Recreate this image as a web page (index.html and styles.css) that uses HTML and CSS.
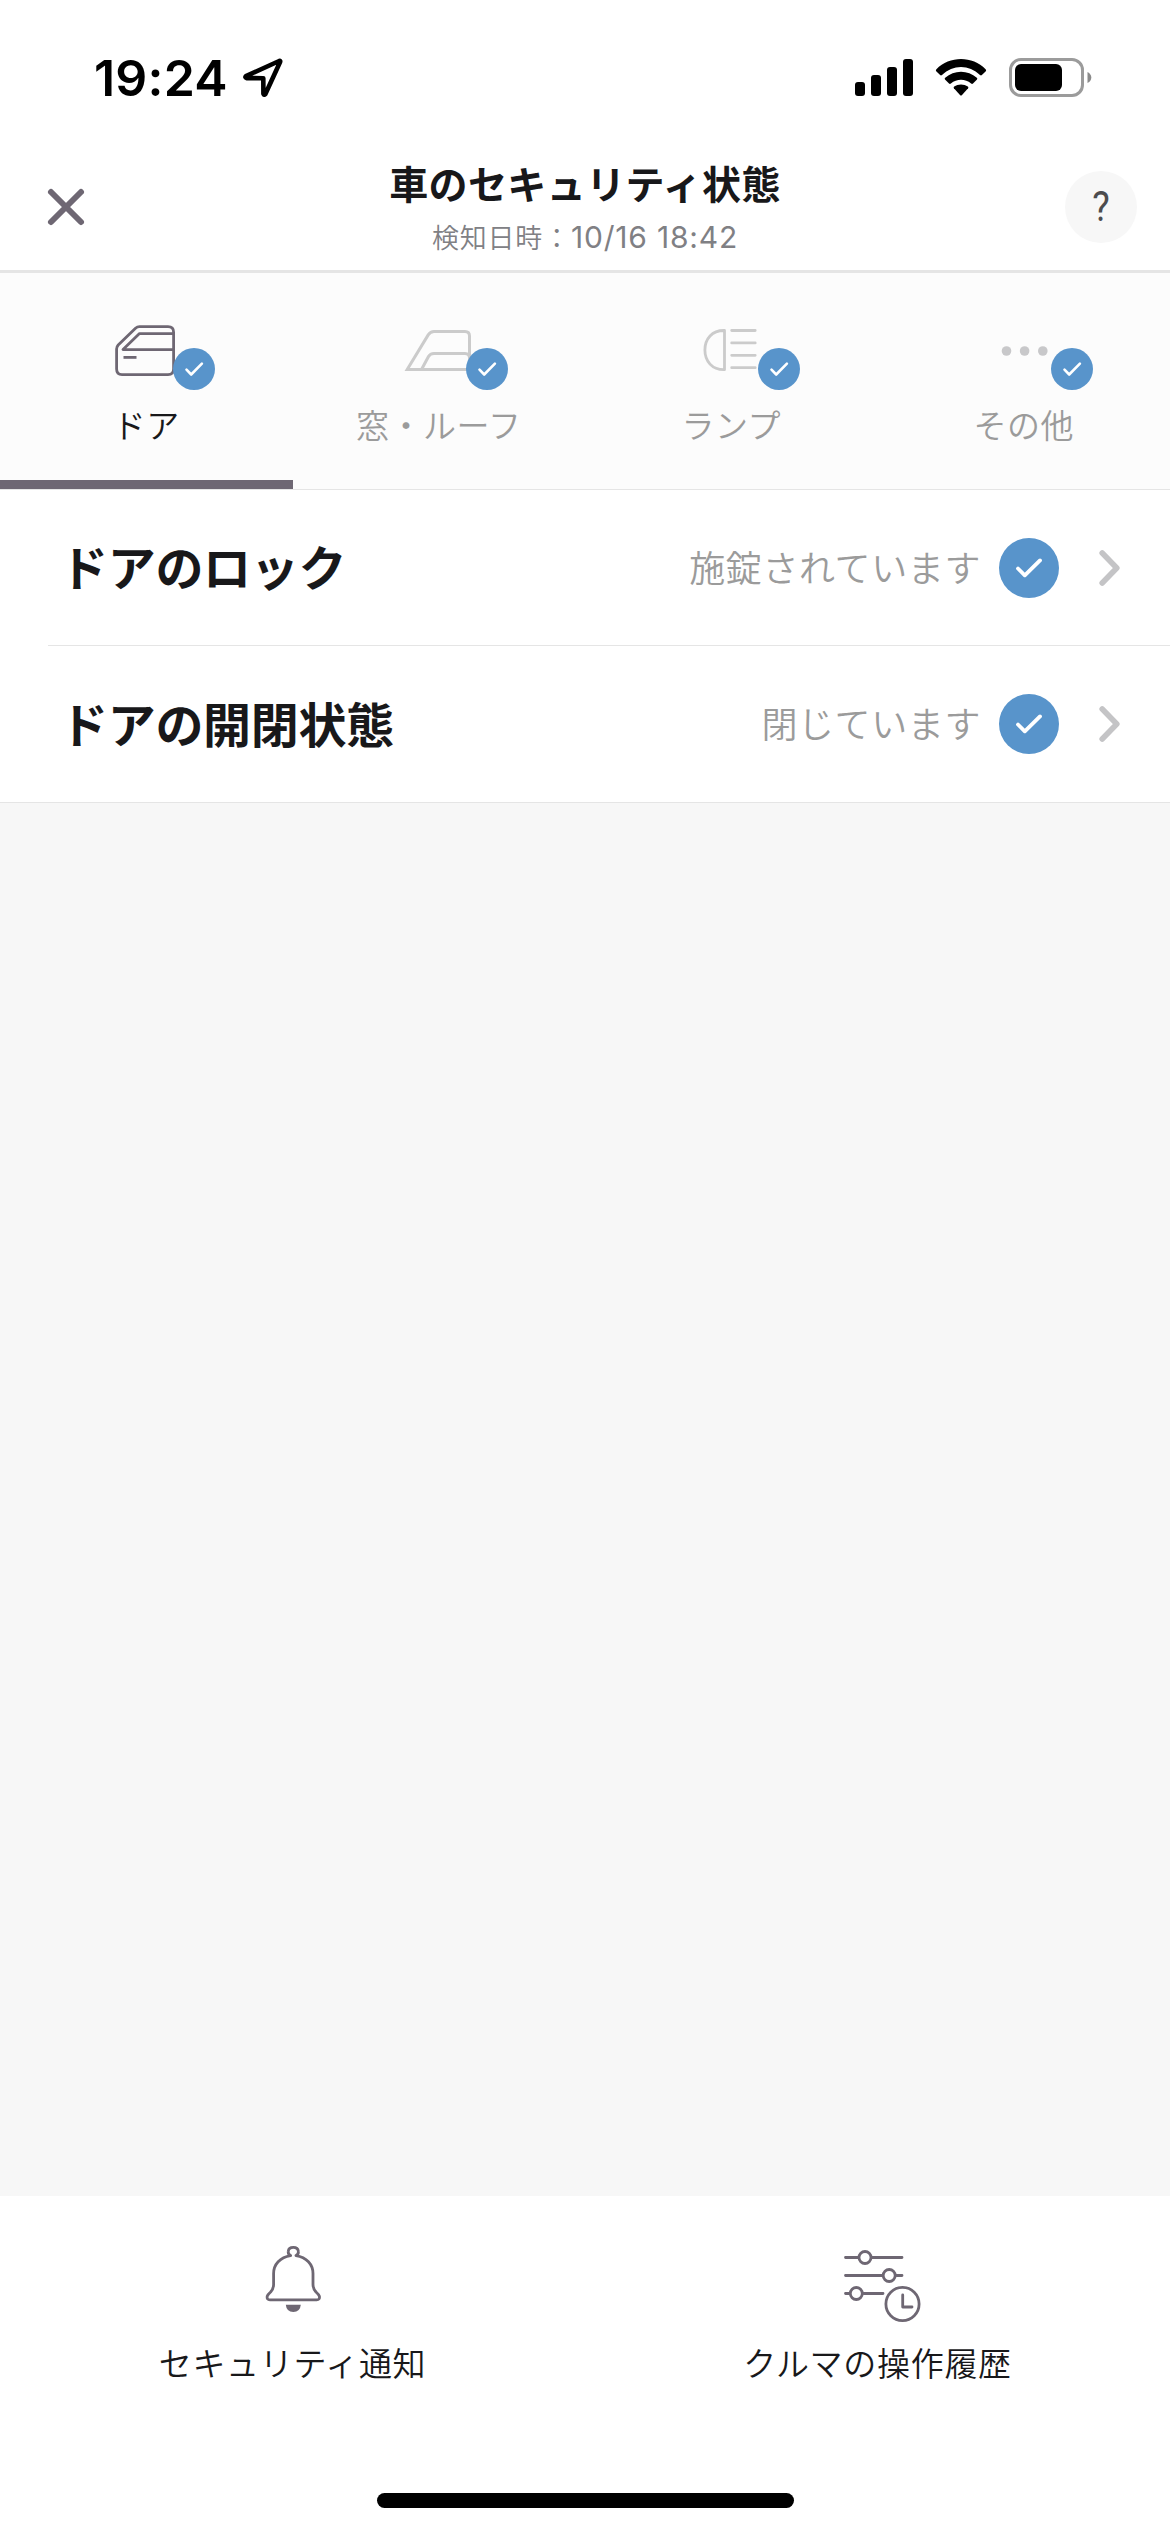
FILE: index.html
```html
<!DOCTYPE html>
<html lang="ja">
<head>
<meta charset="utf-8">
<title>車のセキュリティ状態</title>
<link rel="stylesheet" href="styles.css">
</head>
<body>
<svg width="0" height="0" class="defs" aria-hidden="true">
  <symbol id="badge" viewBox="0 0 42 42">
    <circle cx="21" cy="21" r="21" fill="#5894cb"/>
    <path d="M13.5 21.7 L18.2 26.5 L28.9 15.7" fill="none" stroke="#fff" stroke-width="2.6" stroke-linecap="round" stroke-linejoin="round"/>
  </symbol>
  <symbol id="check" viewBox="0 0 60 60">
    <circle cx="30" cy="30" r="30" fill="#5894cb"/>
    <path d="M19 30.5 L25.8 37.3 L41 22.4" fill="none" stroke="#fff" stroke-width="3.8" stroke-linecap="round" stroke-linejoin="round"/>
  </symbol>
  <symbol id="chevron" viewBox="0 0 22 36">
    <path d="M3.2 3 L17.8 18 L3.2 33" fill="none" stroke="#c4c4c6" stroke-width="5.6" stroke-linecap="round" stroke-linejoin="round"/>
  </symbol>
</svg>

<div class="statusbar">
  <div class="clock">
    <span class="time">19:24</span>
    <svg class="location" width="40" height="40" viewBox="0 0 40 40"><path d="M2.9 18.2 L36.2 3 Q37.6 2.6 37.1 4 L22.3 36.2 Q21 37.6 20.4 35.8 L20.3 20.2 L3.6 20.1 Q1.6 19.4 2.9 18.2 Z" fill="none" stroke="#000" stroke-width="4.6" stroke-linejoin="round"/></svg>
  </div>
  <div class="indicators">
    <svg width="58" height="38" viewBox="0 0 58 38"><rect x="0" y="23" width="10" height="14" rx="3"/><rect x="16" y="16" width="10" height="21" rx="3"/><rect x="32" y="8" width="10" height="29" rx="3"/><rect x="48" y="0" width="10" height="37" rx="3"/></svg>
    <svg width="52" height="38" viewBox="0 0 52 38">
      <path d="M1.2 12.2 Q0.4 11.2 1.4 10.2 C14.5 -3.4 37.5 -3.4 50.6 10.2 Q51.6 11.2 50.8 12.2 L46.9 16 Q46 16.8 45 16 C34 5.2 18 5.2 7 16 Q6 16.8 5.1 16 Z"/>
      <path d="M10 20.6 Q9.2 19.6 10.2 18.8 C19 10.6 33 10.6 41.8 18.8 Q42.8 19.6 42 20.6 L38 24.6 Q37.1 25.4 36.1 24.6 C30.3 19.6 21.7 19.6 15.9 24.6 Q14.9 25.4 14 24.6 Z"/>
      <path d="M18.9 29.2 Q18.2 28.4 19.2 27.6 C23 24.8 29 24.8 32.8 27.6 Q33.8 28.4 33.1 29.2 L26.8 36.2 Q26 37 25.2 36.2 Z"/>
    </svg>
    <svg width="83" height="40" viewBox="0 0 83 40"><rect x="1.5" y="1.5" width="72" height="36" rx="10.5" fill="none" stroke="#9b9b9b" stroke-width="3"/><rect x="6" y="6" width="47" height="27" rx="6"/><path d="M78.5 14 Q82.3 16 82.3 19.5 Q82.3 23 78.5 25 Z" fill="#8a8a8a"/></svg>
  </div>
</div>

<header class="header">
  <button class="icon-button" aria-label="閉じる"><svg width="36" height="36" viewBox="0 0 36 36"><path d="M3 3 L33 33 M33 3 L3 33" stroke="#6e6773" stroke-width="6" stroke-linecap="round"/></svg></button>
  <div class="heading">
    <h1 class="title">車のセキュリティ状態</h1>
    <p class="detected">検知日時：<span class="stamp">10/16 18:42</span></p>
  </div>
  <button class="help" aria-label="ヘルプ"><span class="help-mark">?</span></button>
</header>

<nav class="tabs">
  <a class="tab active">
    <span class="tab-icon">
      <svg width="66" height="56" viewBox="0 0 66 56" fill="none" stroke="#6e6773" stroke-width="2.8" stroke-linejoin="round"><path d="M26.5 3.6 H55 Q60.6 3.6 60.6 9.2 V46 Q60.6 51.6 55 51.6 H9 Q3.6 51.6 3.6 46 V26 Q3.6 23.8 5.2 22 L22.5 5.2 Q24.3 3.6 26.5 3.6 Z"/><path d="M60.6 10.6 H26.5 L10 26.6 H60.6"/><path d="M10.5 34.4 H23.5"/></svg>
      <svg class="badge"><use href="#badge"/></svg>
    </span>
    <span class="tab-label">ドア</span>
  </a>
  <a class="tab">
    <span class="tab-icon">
      <svg width="72" height="56" viewBox="0 0 72 56" fill="none" stroke="#cbcbcb" stroke-width="3"><path d="M4.2 46.5 L25.2 11.9 Q27.5 8.5 31 8.5 H62 Q66.5 8.5 66.5 13 V46.5 Z"/><path d="M18.5 46.5 L25.5 33.5 Q27.2 30.5 31 30.5 H62 Q66.5 30.5 66.5 35"/></svg>
      <svg class="badge"><use href="#badge"/></svg>
    </span>
    <span class="tab-label">窓・ルーフ</span>
  </a>
  <a class="tab">
    <span class="tab-icon">
      <svg width="66" height="56" viewBox="0 0 66 56" fill="none" stroke="#cbcbcb" stroke-width="2.8" stroke-linecap="round" stroke-linejoin="round"><path d="M26.5 7.5 V46.7 C14 47 6.9 38 6.9 27.1 C6.9 16 14 7.2 26.5 7.5 Z"/><path d="M33.7 7.5 H57.2 M33.7 19.9 H57.2 M33.7 32.3 H57.2 M33.7 44.7 H57.2"/></svg>
      <svg class="badge"><use href="#badge"/></svg>
    </span>
    <span class="tab-label">ランプ</span>
  </a>
  <a class="tab">
    <span class="tab-icon">
      <svg width="66" height="56" viewBox="0 0 66 56" fill="#c8c8ca"><circle cx="15.5" cy="28" r="4.8"/><circle cx="33.6" cy="28" r="4.8"/><circle cx="51.8" cy="28" r="4.8"/></svg>
      <svg class="badge"><use href="#badge"/></svg>
    </span>
    <span class="tab-label">その他</span>
  </a>
</nav>

<main class="content">
  <ul class="list">
    <li class="row">
      <span class="row-label">ドアのロック</span>
      <span class="row-status">施錠されています</span>
      <svg class="row-check"><use href="#check"/></svg>
      <svg class="row-chevron"><use href="#chevron"/></svg>
    </li>
    <li class="row">
      <span class="row-label">ドアの開閉状態</span>
      <span class="row-status">閉じています</span>
      <svg class="row-check"><use href="#check"/></svg>
      <svg class="row-chevron"><use href="#chevron"/></svg>
    </li>
  </ul>
</main>

<footer class="footer">
  <div class="actions">
    <a class="action">
      <svg class="action-icon" viewBox="0 0 84 80" fill="none" stroke="#6e6773" stroke-width="2.8" stroke-linejoin="round" stroke-linecap="round"><path d="M39.6 16.6 Q36.8 15.2 37.3 12.2 C37.8 7.1 46.8 7.1 47.3 12.2 Q47.8 15.2 45 16.6 C55.5 18.2 62 25.4 62 34.5 V45.5 Q62 49.6 65 53 Q67.8 55.6 68.4 57.2 Q69 60.9 65.6 60.9 H19 Q15.6 60.9 16.2 57.2 Q16.8 55.6 19.6 53 Q22.6 49.6 22.6 45.5 V34.5 C22.6 25.4 29.1 18.2 39.6 16.6"/><path d="M34.8 65.8 H49.8 Q49.1 73 42.3 73 Q35.5 73 34.8 65.8 Z" fill="#6e6773" stroke="none"/></svg>
      <span class="action-label">セキュリティ通知</span>
    </a>
    <a class="action">
      <svg class="action-icon" viewBox="0 0 84 80" fill="none" stroke="#6e6773" stroke-width="2.8" stroke-linecap="round"><path d="M9.5 18.5 H21.8 M36.2 18.5 H66 M9.5 36.5 H46.2 M60.5 36.5 H66 M9.5 54.5 H13.2 M27.6 54.5 H47"/><circle cx="29" cy="18.5" r="6"/><circle cx="53.2" cy="36.5" r="6"/><circle cx="20.3" cy="54.5" r="6"/><circle cx="66.5" cy="65" r="16.6"/><path d="M66.7 56 V68 H76" stroke-linejoin="round"/></svg>
      <span class="action-label">クルマの操作履歴</span>
    </a>
  </div>
  <div class="home-indicator"></div>
</footer>
</body>
</html>
```
FILE: styles.css
```css
* { box-sizing: border-box; margin: 0; padding: 0; }

body {
  width: 1170px;
  height: 2532px;
  display: flex;
  flex-direction: column;
  background: #fff;
  color: #18181a;
  font-family: "Noto Sans CJK JP", sans-serif;
  overflow: hidden;
}

svg { display: block; overflow: visible; flex: none; }
.defs { position: absolute; }
button { border: 0; background: none; font: inherit; }

.statusbar {
  height: 144px;
  padding: 58px 78px 0 94px;
  display: flex;
  justify-content: space-between;
  align-items: flex-start;
  color: #000;
}
.clock { display: flex; gap: 15px; }
.time {
  font: 600 50px/40px "Inter", sans-serif;
  letter-spacing: 0.2px;
  width: 134px;
  white-space: nowrap;
}
.indicators { display: flex; gap: 22px; padding-top: 1px; }
.indicators svg:last-child { margin-top: -1px; }

.header {
  height: 129px;
  padding: 0 33px 0 48px;
  border-bottom: 3px solid #e5e5e5;
  display: grid;
  grid-template-columns: 72px 1fr 72px;
}
.icon-button { height: 126px; display: flex; align-items: center; }
.heading { text-align: center; padding: 12px 0 0 0; margin-right: 15px; }
.title { font-size: 39px; line-height: 52px; font-weight: 700; letter-spacing: 0.4px; }
.detected { font-size: 27px; line-height: 57px; font-weight: 350; letter-spacing: 0.8px; color: #808084; }
.stamp { font-family: "Inter", sans-serif; font-size: 30px; font-weight: 400; }
.help {
  width: 72px;
  height: 72px;
  margin-top: 27px;
  border-radius: 50%;
  background: #f7f7f7;
  display: flex;
  align-items: center;
  justify-content: center;
}
.help-mark {
  font: 400 42px/42px Roboto, sans-serif;
  color: #4c4c4e;
  transform: scaleX(0.88);
}

.tabs {
  height: 217px;
  display: grid;
  grid-template-columns: repeat(4, 1fr);
  background: #fcfcfc;
  border-bottom: 1px solid #e5e5e5;
}
.tab {
  display: flex;
  flex-direction: column;
  align-items: center;
  padding-top: 50px;
  border-bottom: 9px solid transparent;
  color: #9b9b9b;
}
.tab.active { color: #18181a; border-bottom-color: #6e6773; }
.tab-icon { position: relative; width: 66px; height: 56px; display: flex; justify-content: center; }
.badge { position: absolute; left: 60px; top: 25px; width: 42px; height: 42px; }
.tab-label { margin-top: 21px; font-size: 33px; line-height: 48px; font-weight: 350; letter-spacing: 0.5px; }

.content { flex: 1; background: #f7f7f7; }
.list { list-style: none; background: #fff; border-bottom: 1px solid #e5e5e5; padding-left: 48px; }
.row {
  height: 156px;
  padding: 0 49px 0 12px;
  display: flex;
  align-items: center;
}
.row:first-child { border-bottom: 1px solid #e5e5e5; }
.row-label { flex: 1; padding-bottom: 5px; font-size: 48px; line-height: 72px; font-weight: 700; letter-spacing: -0.3px; }
.row-status { padding-bottom: 4px; font-size: 36px; line-height: 54px; font-weight: 350; letter-spacing: 0.6px; color: #9b9b9b; }
.row-check { width: 60px; height: 60px; margin-left: 18px; }
.row-chevron { width: 22px; height: 36px; margin-left: 40px; }

.footer { height: 336px; background: #fff; display: flex; flex-direction: column; align-items: center; }
.actions { width: 1170px; height: 297px; display: grid; grid-template-columns: 1fr 1fr; }
.action { display: flex; flex-direction: column; align-items: center; padding-top: 43px; }
.action-icon { width: 84px; height: 80px; }
.action-label { margin-top: 19px; font-size: 33px; line-height: 48px; font-weight: 350; letter-spacing: 0.7px; }
.home-indicator { width: 417px; height: 15px; border-radius: 8px; background: #000; }
```
